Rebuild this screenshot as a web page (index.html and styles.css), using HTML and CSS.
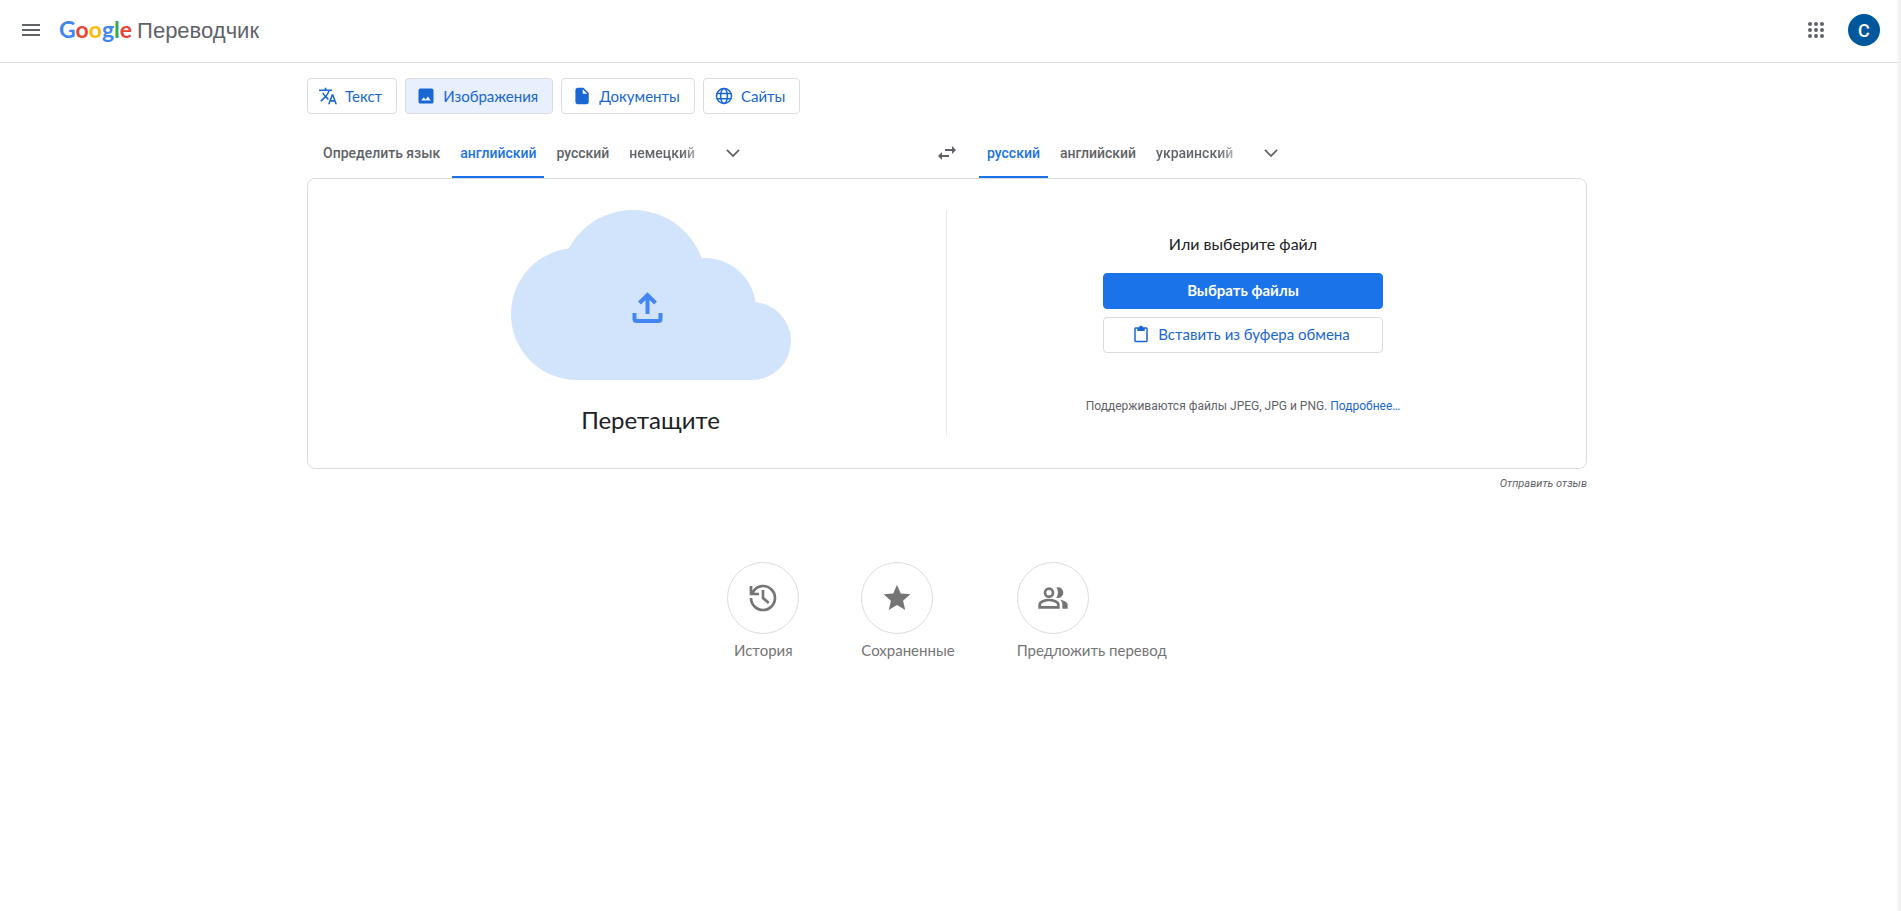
FILE: index.html
```html
<!DOCTYPE html>
<html lang="ru">
<head>
<meta charset="utf-8">
<meta name="viewport" content="width=device-width, initial-scale=1">
<title>Google Переводчик</title>
<link rel="stylesheet" href="styles.css">
</head>
<body>
<header class="topbar">
  <button class="icon-button" type="button" aria-label="Главное меню">
    <svg width="24" height="24" viewBox="0 0 24 24"><path d="M3 18h18v-2H3v2zm0-5h18v-2H3v2zm0-7v2h18V6H3z"/></svg>
  </button>
  <a class="brand" href="#">
    <span class="wordmark"><span class="blue">G</span><span class="red">o</span><span class="yellow">o</span><span class="blue">g</span><span class="green">l</span><span class="red">e</span></span>
    <span class="product">Переводчик</span>
  </a>
  <div class="account">
    <button class="icon-button" type="button" aria-label="Приложения Google">
      <svg width="24" height="24" viewBox="0 0 24 24"><g><circle cx="6" cy="6" r="2"/><circle cx="12" cy="6" r="2"/><circle cx="18" cy="6" r="2"/><circle cx="6" cy="12" r="2"/><circle cx="12" cy="12" r="2"/><circle cx="18" cy="12" r="2"/><circle cx="6" cy="18" r="2"/><circle cx="12" cy="18" r="2"/><circle cx="18" cy="18" r="2"/></g></svg>
    </button>
    <button class="avatar" type="button">C</button>
  </div>
</header>

<main class="page">
  <nav class="modes">
    <button class="mode" type="button">
      <svg width="18" height="18" viewBox="1 1 22 22"><path d="M12.87 15.07l-2.54-2.51.03-.03c1.74-1.94 2.98-4.17 3.71-6.53H17V4h-7V2H8v2H1v1.99h11.17C11.5 7.92 10.44 9.75 9 11.35 8.07 10.32 7.3 9.19 6.69 8h-2c.73 1.63 1.73 3.17 2.98 4.56l-5.09 5.02L4 19l5-5 3.11 3.11.76-2.04zM18.5 10h-2L12 22h2l1.12-3h4.75L21 22h2l-4.5-12zm-2.62 7l1.62-4.33L19.12 17h-3.24z"/></svg>
      Текст
    </button>
    <button class="mode active" type="button">
      <svg width="18" height="18" viewBox="0 0 24 24"><path d="M19.500 2h-15A2.500 2.500 0 0 0 2 4.500v15A2.500 2.500 0 0 0 4.500 22h15a2.500 2.500 0 0 0 2.500-2.500v-15A2.500 2.500 0 0 0 19.500 2zM5.500 18l3.500-4.500 2.500 3 3-4L18.500 18z"/></svg>
      Изображения
    </button>
    <button class="mode" type="button">
      <svg width="18" height="18" viewBox="0 0 24 24"><path d="M6 1a3 3 0 0 0-2.800 3v16A3 3 0 0 0 6 23h12a3 3 0 0 0 3-3V8l-7-7H6zm7 8V3l6 6h-6z"/></svg>
      Документы
    </button>
    <button class="mode" type="button">
      <svg width="18" height="18" viewBox="0 0 24 24"><g fill="none" stroke="currentColor" stroke-width="2"><circle cx="12" cy="12" r="10"/><ellipse cx="12" cy="12" rx="4.500" ry="10"/><path d="M2.500 8.500h19M2.500 15.500h19"/></g></svg>
      Сайты
    </button>
  </nav>

  <div class="languages">
    <div class="language-side">
      <button class="lang" type="button">Определить язык</button>
      <button class="lang selected" type="button">английский</button>
      <button class="lang" type="button">русский</button>
      <button class="lang fading" type="button">немецкий</button>
      <button class="more" type="button" aria-label="Другие исходные языки">
        <svg width="20" height="20" viewBox="0 0 24 24"><path d="M5.410 7.590L4 9l8 8 8-8-1.410-1.410L12 14.170z"/></svg>
      </button>
    </div>
    <button class="swap" type="button" aria-label="Поменять языки местами">
      <svg width="24" height="24" viewBox="0 0 24 24"><path d="M6.990 11L3 15l3.990 4v-3H14v-2H6.990v-3zM21 9l-3.990-4v3H10v2h7.010v3L21 9z"/></svg>
    </button>
    <div class="language-side">
      <button class="lang selected" type="button">русский</button>
      <button class="lang" type="button">английский</button>
      <button class="lang fading" type="button">украинский</button>
      <button class="more" type="button" aria-label="Другие языки перевода">
        <svg width="20" height="20" viewBox="0 0 24 24"><path d="M5.410 7.590L4 9l8 8 8-8-1.410-1.410L12 14.170z"/></svg>
      </button>
    </div>
  </div>

  <section class="card">
    <div class="drop">
      <svg class="cloud" width="280" height="170" viewBox="0 0 280 170">
        <g fill="#d2e3fc"><circle cx="66" cy="104" r="66"/><circle cx="122" cy="73" r="73"/><circle cx="194" cy="99" r="51"/><circle cx="241" cy="131" r="39"/><path d="M66 100h175v70H66z"/></g>
        <path fill="none" stroke="#4285f4" stroke-width="4" d="M136.500 104V85M128.500 93l8-8 8 8M123.500 103v6a2 2 0 0 0 2 2h22a2 2 0 0 0 2-2v-6"/>
      </svg>
      <h1 class="drop-title">Перетащите</h1>
    </div>
    <div class="choose">
      <h2 class="choose-title">Или выберите файл</h2>
      <button class="action primary" type="button">Выбрать файлы</button>
      <button class="action" type="button">
        <svg width="18" height="18" viewBox="0 0 24 24"><path d="M19 3h-4.180C14.400 1.840 13.300 1 12 1s-2.400.840-2.820 2H5c-1.100 0-2 .9-2 2v16c0 1.100.9 2 2 2h14c1.100 0 2-.9 2-2V5c0-1.100-.9-2-2-2zm0 18H5V5h2v3h10V5h2v16z"/></svg>
        Вставить из буфера обмена
      </button>
      <p class="formats">Поддерживаются файлы JPEG, JPG и PNG. <a href="#">Подробнее…</a></p>
    </div>
  </section>
  <a class="feedback" href="#">Отправить отзыв</a>

  <nav class="shortcuts">
    <a class="shortcut" href="#">
      <span class="disc"><svg width="32" height="32" viewBox="0 0 24 24"><path d="M12 2C8.500 2 5.700 3.700 4 6.300V3H2v7h7V8H5.400C6.700 5.600 9.100 4 12 4a8 8 0 1 1-8 8H2a10 10 0 1 0 10-10zM11 6v6.500l4.700 4 1.300-1.500-4-3.500V6z"/></svg></span>
      <span class="centered">История</span>
    </a>
    <a class="shortcut" href="#">
      <span class="disc"><svg width="32" height="32" viewBox="0 0 24 24"><path d="M12 17.270L18.180 21l-1.640-7.030L22 9.240l-7.190-.61L12 2 9.190 8.630 2 9.240l5.460 4.730L5.820 21z"/></svg></span>
      <span>Сохраненные</span>
    </a>
    <a class="shortcut" href="#">
      <span class="disc"><svg width="32" height="32" viewBox="0 0 24 24"><g fill="none" stroke="currentColor" stroke-width="2"><circle cx="9" cy="8" r="3"/><path d="M2 19v-2c0-2 4-3.500 7-3.500s7 1.500 7 3.500v2z"/></g><path d="M14.500 4.200a4 4 0 1 1 0 7.600c1.600-2.100 1.600-5.500 0-7.600zM17.500 13.300c2.800.5 5.500 1.700 5.500 3.700v3h-4v-3c0-1.500-.5-2.700-1.500-3.700z"/></svg></span>
      <span>Предложить перевод</span>
    </a>
  </nav>
</main>
</body>
</html>
```
FILE: styles.css
```css
* {
  box-sizing: border-box;
}

body {
  margin: 0;
  min-height: 100vh;
  border-right: 3px solid #f1f1f1;
  background: #fff;
  color: #202124;
  font-family: Lato, "Noto Sans", sans-serif;
  font-size: 15px;
}

button {
  display: flex;
  align-items: center;
  justify-content: center;
  margin: 0;
  padding: 0;
  border: 0;
  background: none;
  color: inherit;
  font: inherit;
  cursor: pointer;
}

a {
  color: inherit;
  text-decoration: none;
}

svg {
  display: block;
  flex: none;
  fill: currentColor;
}

.topbar {
  display: flex;
  align-items: center;
  height: 63px;
  padding: 0 18px 2px 11px;
  border-bottom: 1px solid #dadce0;
  color: #5f6368;
}

.icon-button {
  width: 40px;
  height: 40px;
}

.brand {
  display: flex;
  align-items: baseline;
  gap: 5px;
  margin-left: 8px;
  padding-bottom: 1px;
}

.wordmark {
  font-size: 23px;
  font-weight: 700;
}

.blue { color: #4285f4; }
.red { color: #ea4335; }
.yellow { color: #fbbc05; }
.green { color: #34a853; }

.product {
  font-family: "Liberation Sans", Arial, sans-serif;
  font-size: 22px;
}

.account {
  display: flex;
  align-items: center;
  gap: 12px;
  margin-left: auto;
}

.avatar {
  width: 32px;
  height: 32px;
  border-radius: 50%;
  background: #01579b;
  color: #fff;
  font-family: Roboto, sans-serif;
  font-size: 18px;
  font-weight: 500;
}

.page {
  display: flex;
  flex-direction: column;
  max-width: 1284px;
  margin: 0 auto;
  padding: 15px 4px 0 0;
}

.modes {
  display: flex;
  gap: 8px;
}

.mode,
.action {
  gap: 8px;
  height: 36px;
  border: 1px solid #dadce0;
  border-radius: 4px;
  color: #1967d2;
}

.mode {
  padding: 0 14px 1px 11px;
}

.mode.active {
  background: #e8f0fe;
}

.languages {
  display: grid;
  grid-template-columns: 1fr 48px 1fr;
  height: 50px;
  margin-top: 14px;
  color: #5f6368;
}

.language-side {
  display: flex;
  gap: 4px;
  padding-left: 8px;
  font-family: Roboto, sans-serif;
  font-size: 14px;
  font-weight: 500;
}

.lang {
  padding: 2px 8px 0;
  border-bottom: 2px solid transparent;
}

.lang.selected {
  border-color: #1a73e8;
  color: #1a73e8;
}

.lang.fading {
  background: linear-gradient(90deg, #5f6368 75%, #bdc1c6 95%);
  background-clip: text;
  color: transparent;
}

.more {
  width: 48px;
  margin-left: 2px;
}

.card {
  display: grid;
  grid-template-columns: 1fr 1fr;
  padding: 31px 47px 32px;
  border: 1px solid #dadce0;
  border-radius: 8px;
}

.drop,
.choose {
  display: flex;
  flex-direction: column;
  align-items: center;
}

.drop {
  border-right: 1px solid #e8eaed;
}

.drop-title {
  margin: 24px 0 0;
  font-size: 24px;
  font-weight: 400;
  line-height: 32px;
}

.choose {
  padding-top: 22px;
}

.choose-title {
  margin: 0 0 17px;
  font-size: 16px;
  font-weight: 400;
  line-height: 24px;
}

.action {
  width: 280px;
  margin-bottom: 8px;
  padding: 0 4px 2px 0;
}

.action.primary {
  padding: 0 0 2px;
  border-color: #1a73e8;
  background: #1a73e8;
  color: #fff;
  font-weight: 700;
}

.formats {
  margin: 37px 0 0;
  color: #5f6368;
  font-family: Roboto, sans-serif;
  font-size: 12px;
  line-height: 16px;
}

.formats a {
  color: #1967d2;
}

.feedback {
  align-self: flex-end;
  margin-top: 7px;
  color: #5f6368;
  font-family: Roboto, sans-serif;
  font-size: 11px;
  font-style: italic;
  line-height: 16px;
}

.shortcuts {
  display: flex;
  justify-content: center;
  gap: 62px;
  margin-top: 70px;
  color: #757575;
}

.shortcut {
  display: flex;
  flex-direction: column;
  gap: 6px;
  line-height: 20px;
}

.centered {
  text-align: center;
}

.disc {
  display: grid;
  place-items: center;
  width: 72px;
  height: 72px;
  border: 1px solid #dadce0;
  border-radius: 50%;
}
```
